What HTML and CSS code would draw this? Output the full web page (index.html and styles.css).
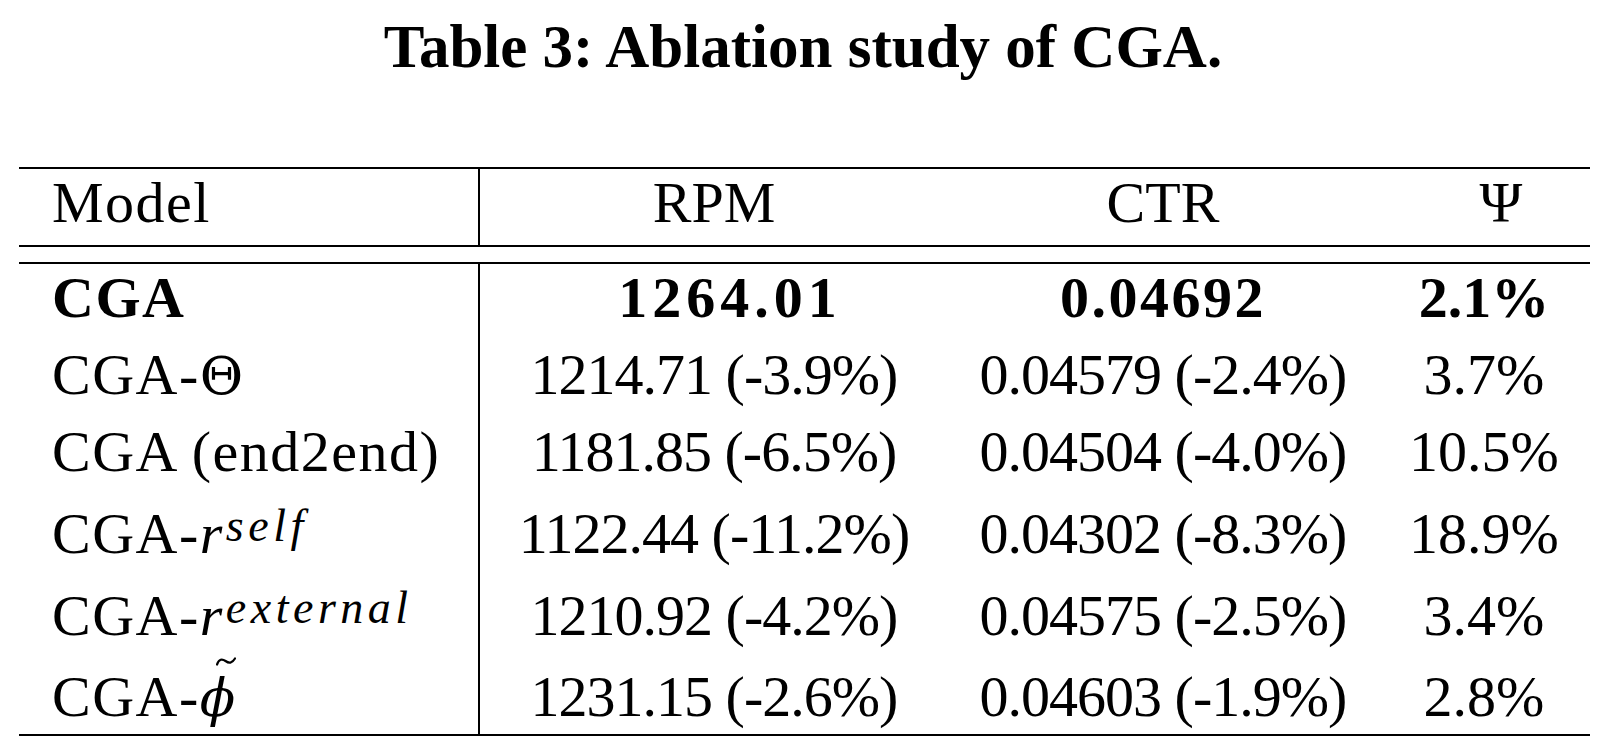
FILE: index.html
```html
<!DOCTYPE html>
<html lang="en">
<head>
<meta charset="utf-8">
<title>Table 3: Ablation study of CGA.</title>
<link rel="stylesheet" href="styles.css">
</head>
<body>
<h1 class="caption">Table 3: Ablation study of CGA.</h1>
<div class="table">
  <div class="row head">
    <div class="cell model">Model</div>
    <div class="cell">RPM</div>
    <div class="cell">CTR</div>
    <div class="cell psi">Ψ</div>
  </div>
  <div class="tbody">
    <div class="row best">
      <div class="cell model">CGA</div>
      <div class="cell rpm">1264.01</div>
      <div class="cell ctr">0.04692</div>
      <div class="cell">2.1%</div>
    </div>
    <div class="row">
      <div class="cell model">CGA-<span class="greek">Θ</span></div>
      <div class="cell num">1214.71 (-3.9%)</div>
      <div class="cell num">0.04579 (-2.4%)</div>
      <div class="cell">3.7%</div>
    </div>
    <div class="row">
      <div class="cell model">CGA (end2end)</div>
      <div class="cell num">1181.85 (-6.5%)</div>
      <div class="cell num">0.04504 (-4.0%)</div>
      <div class="cell">10.5%</div>
    </div>
    <div class="row tall">
      <div class="cell model">CGA-<i class="math">r</i><sup class="sup">self</sup></div>
      <div class="cell num">1122.44 (-11.2%)</div>
      <div class="cell num">0.04302 (-8.3%)</div>
      <div class="cell">18.9%</div>
    </div>
    <div class="row tall">
      <div class="cell model">CGA-<i class="math">r</i><sup class="sup">external</sup></div>
      <div class="cell num">1210.92 (-4.2%)</div>
      <div class="cell num">0.04575 (-2.5%)</div>
      <div class="cell">3.4%</div>
    </div>
    <div class="row last">
      <div class="cell model">CGA-<span class="acc">ϕ<svg class="tilde" viewBox="0 0 20 9" width="20" height="9" aria-hidden="true"><path d="M1 7.5 C3 2, 6 1.5, 9.5 4 S16 6.5, 19 1.5" fill="none" stroke="#000" stroke-width="2.2" stroke-linecap="round"/></svg></span></div>
      <div class="cell num">1231.15 (-2.6%)</div>
      <div class="cell num">0.04603 (-1.9%)</div>
      <div class="cell">2.8%</div>
    </div>
  </div>
</div>
</body>
</html>
```
FILE: styles.css
```css
html, body {
  margin: 0;
  padding: 0;
  background: #fff;
  color: #000;
}

.caption {
  margin: 16px 0 0 0;
  height: 61px;
  font-family: "Liberation Serif", "DejaVu Serif", serif;
  font-size: 61px;
  line-height: 61px;
  font-weight: bold;
  text-align: center;
}

.table {
  margin: 90px 0 0 19px;
  width: 1571px;
}

.row {
  display: grid;
  grid-template-columns: 461px 468px 430px 212px;
  box-sizing: border-box;
  height: 77px;
}

.cell {
  font-family: "Liberation Serif", "DejaVu Serif", serif;
  font-size: 58px;
  line-height: 58px;
  text-align: center;
  white-space: nowrap;
  padding-top: 5px;
}

.cell.model {
  text-align: left;
  padding-left: 33px;
  border-right: 2px solid #000;
  letter-spacing: 1.5px;
}

.cell.num {
  letter-spacing: -1px;
}

.cell.psi {
  padding-left: 34px;
}

.head {
  height: 80px;
  border-top: 2px solid #000;
  border-bottom: 2px solid #000;
}

.tbody {
  margin-top: 15px;
  border-top: 2px solid #000;
  border-bottom: 2px solid #000;
}

.best .cell {
  font-weight: bold;
}

.best .cell.rpm {
  letter-spacing: 5px;
  padding-left: 32px;
}

.best .cell.ctr {
  letter-spacing: 2.5px;
}

.row.tall {
  height: 82px;
}

.row.tall .cell {
  padding-top: 10px;
}

.row.last {
  height: 75px;
}

.row.last .cell {
  padding-top: 9px;
}

.greek {
  font-family: "DejaVu Serif", serif;
  font-size: 53px;
  letter-spacing: 0;
}

.math {
  font-style: italic;
}

.sup {
  font-style: italic;
  font-size: 46px;
  line-height: 0;
  vertical-align: 12px;
  letter-spacing: 4.5px;
  margin-left: 2px;
}

.acc {
  position: relative;
  display: inline-block;
  font-style: italic;
  font-family: "DejaVu Serif", serif;
  font-size: 52px;
  letter-spacing: 0;
}

.tilde {
  position: absolute;
  left: 16px;
  top: -12px;
}
```
